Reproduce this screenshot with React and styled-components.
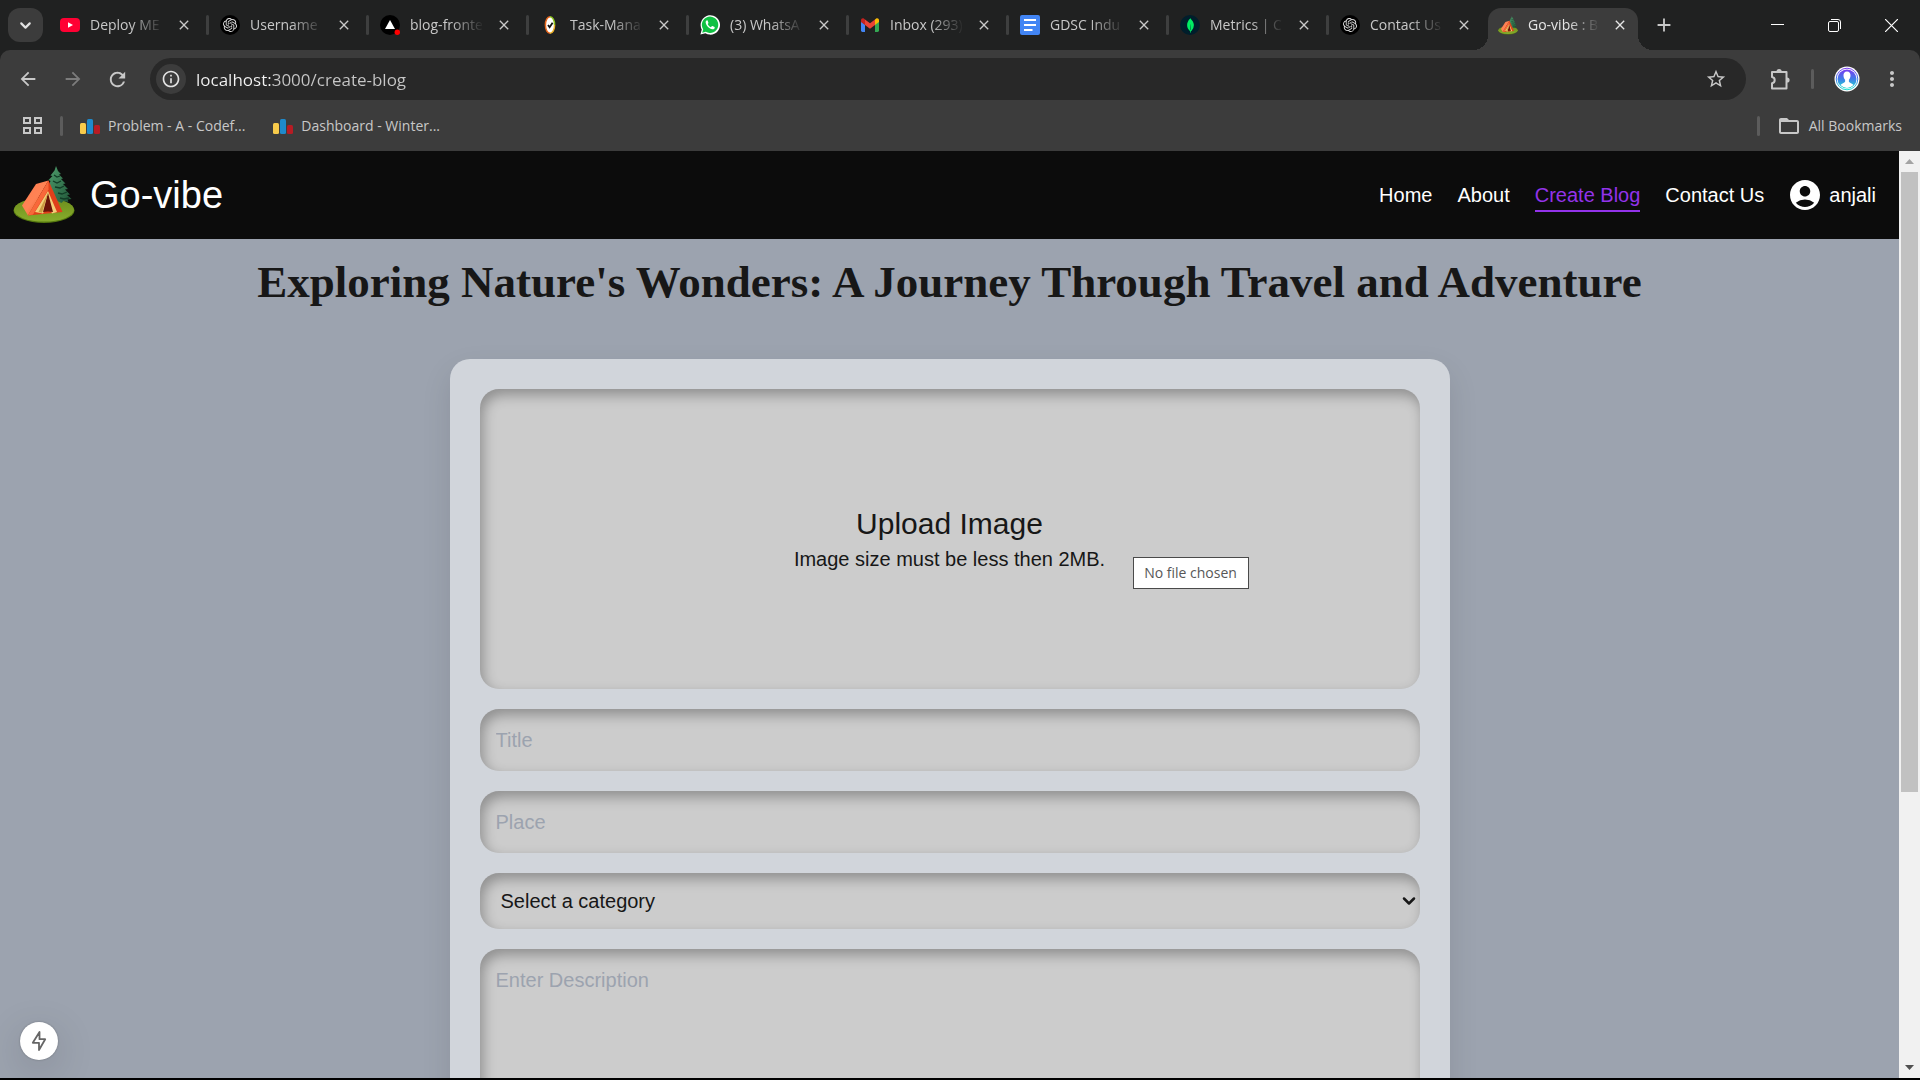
import React from "react";
import styled, { createGlobalStyle, css } from "styled-components";
import {
  MdAccountCircle,
  MdAdd,
  MdArrowBack,
  MdArrowForward,
  MdClose,
  MdFolderOpen,
  MdInfoOutline,
  MdMoreVert,
  MdRefresh,
  MdStarBorder,
} from "react-icons/md";
import { SiMongodb, SiOpenai } from "react-icons/si";
import { ChevronDown } from "lucide-react";

const sans = `"Liberation Sans", Arial, sans-serif`;
const ui = `"Open Sans", "Segoe UI", sans-serif`;

const GlobalStyle = createGlobalStyle`
  *, *::before, *::after { box-sizing: border-box; }
  body { margin: 0; background: #000; overflow: hidden; }
  button, input, select, textarea { font: inherit; margin: 0; }
  button { border: 0; padding: 0; background: none; color: inherit; }
  svg { display: block; flex: none; }
`;

const Window = styled.div`
  display: flex;
  flex-direction: column;
  height: 100vh;
  padding-bottom: 2px;
  font-family: ${ui};
`;

/* ---------- tab strip ---------- */

const TabStrip = styled.div`
  display: flex;
  align-items: flex-end;
  height: 50px;
  flex: none;
  padding-left: 8px;
  background: #202121;
  color: #c8c8c8;
`;

const TabSearch = styled.button`
  display: grid;
  place-items: center;
  width: 35px;
  height: 34px;
  margin: 0 5px 8px 0;
  border-radius: 12px;
  background: #3c3c3c;
  color: #e3e3e3;
  flex: none;
`;

const Tab = styled.div`
  position: relative;
  display: flex;
  align-items: center;
  flex: 0 1 160px;
  min-width: 0;
  height: 42px;
  padding: 0 16px 8px 12px;
  ${(p) =>
    !p.$active &&
    css`
      &::after {
        content: "";
        position: absolute;
        right: -1px;
        top: 7px;
        width: 3px;
        height: 20px;
        border-radius: 2px;
        background: #3e3f3f;
      }
      &:nth-last-child(4)::after { display: none; }
    `}
  ${(p) =>
    p.$active &&
    css`
      flex-basis: 150px;
      padding: 0 10px 8px;
      background: #3c3c3c;
      color: #e6e6e6;
      border-radius: 13px 13px 0 0;
      &::before,
      &::after {
        content: "";
        position: absolute;
        bottom: 0;
        width: 15px;
        height: 15px;
      }
      &::before {
        right: 100%;
        background: radial-gradient(circle at 0 0, transparent 15px, #3c3c3c 15px);
      }
      &::after {
        left: 100%;
        background: radial-gradient(circle at 100% 0, transparent 15px, #3c3c3c 15px);
      }
    `}
`;

const TabTitle = styled.button`
  flex: 1;
  min-width: 0;
  height: 34px;
  margin: 0 12px 0 10px;
  overflow: hidden;
  white-space: nowrap;
  text-align: left;
  font-size: 14px;
  line-height: 34px;
  mask-image: linear-gradient(90deg, #000 55%, transparent 100%);
`;

const TabClose = styled.button`
  width: 16px;
  height: 16px;
  flex: none;
`;

const NewTab = styled.button`
  display: grid;
  place-items: center;
  width: 34px;
  height: 34px;
  margin: 0 0 8px 9px;
  flex: none;
`;

const WindowControls = styled.div`
  display: flex;
  height: 50px;
  margin-left: auto;
  color: #fff;
`;

const WindowButton = styled.button`
  display: grid;
  place-items: center;
  width: 57px;
  height: 50px;
`;

/* ---------- toolbar ---------- */

const Chrome = styled.div`
  flex: none;
  background: #202121;
`;

const ChromePanel = styled.div`
  border-radius: 10px 10px 0 0;
  background: #3c3c3c;
  color: #c8c8c8;
`;

const Toolbar = styled.div`
  display: flex;
  align-items: center;
  height: 58px;
  padding: 0 6px 0 5px;
`;

const IconButton = styled.button`
  display: grid;
  place-items: center;
  width: 45px;
  height: 42px;
  flex: none;
  color: ${(p) => (p.$dim ? "#7c7c7c" : "#c8c8c8")};
`;

const AddressBar = styled.div`
  display: flex;
  align-items: center;
  flex: 1;
  height: 42px;
  margin: 0 11px 0 10px;
  padding: 0 8px 0 6px;
  border-radius: 21px;
  background: #282828;
`;

const SiteInfo = styled.button`
  display: grid;
  place-items: center;
  width: 30px;
  height: 30px;
  border-radius: 50%;
  background: #3c3c3c;
  color: #e3e3e3;
  flex: none;
`;

const AddressInput = styled.input`
  flex: 1;
  min-width: 0;
  height: 40px;
  margin-left: 10px;
  padding: 0;
  border: 0;
  outline: 0;
  font-size: 17px;
  color: transparent;
  background: linear-gradient(90deg, #f4f4f4 78px, #c7c7c7 78px);
  background-clip: text;
`;

const Divider = styled.span`
  width: 3px;
  height: 20px;
  border-radius: 2px;
  background: #5c5c5c;
  flex: none;
`;

const ToolbarDivider = styled(Divider)`
  margin: 0 10px 0 9px;
`;

const Bookmarks = styled.div`
  display: flex;
  align-items: center;
  height: 43px;
  padding: 0 18px 8px 23px;
  font-size: 14px;
`;

const BookmarkDivider = styled(Divider)`
  margin: 0 17px;
`;

const Bookmark = styled.a`
  display: flex;
  align-items: center;
  gap: 8px;
  margin-right: 28px;
  color: inherit;
  text-decoration: none;
  white-space: nowrap;
`;

const AllBookmarks = styled.button`
  display: flex;
  align-items: center;
  gap: 8px;
`;

const Spacer = styled.div`
  flex: 1;
`;

/* ---------- page ---------- */

const Viewport = styled.div`
  position: relative;
  display: flex;
  flex: 1;
  min-height: 0;
`;

const Page = styled.div`
  flex: 1;
  min-width: 0;
  overflow: hidden;
  background: #9ca3af;
  color: #171717;
  font-family: ${sans};
`;

const Header = styled.header`
  display: flex;
  align-items: center;
  justify-content: space-between;
  height: 88px;
  padding: 0 23px 0 13px;
  background: #0c0c0c;
  color: #fff;
`;

const Brand = styled.a`
  display: flex;
  align-items: center;
  gap: 15px;
  color: inherit;
  font-size: 38px;
  line-height: 48px;
  text-decoration: none;
`;

const Nav = styled.nav`
  display: flex;
  align-items: center;
  gap: 25px;
  font-size: 20px;
`;

const NavLink = styled.a`
  padding: 4px 0 2px;
  line-height: 26px;
  color: ${(p) => (p.$active ? "#9333ea" : "#fff")};
  border-bottom: 2px solid ${(p) => (p.$active ? "#9333ea" : "transparent")};
  text-decoration: none;
  white-space: nowrap;
`;

const UserButton = styled.button`
  display: flex;
  align-items: center;
  gap: 6px;
  margin-left: -2px;
`;

const Heading = styled.h1`
  margin: 0;
  padding: 20px 24px 54px;
  font-family: "Liberation Serif", Georgia, serif;
  font-size: 45px;
  font-weight: 700;
  line-height: 46px;
  text-align: center;
`;

const Card = styled.form`
  display: flex;
  flex-direction: column;
  gap: 20px;
  max-width: 1000px;
  margin: 0 auto 40px;
  padding: 30px;
  border-radius: 20px;
  background: #d1d5db;
  box-shadow: 0 12px 30px rgba(0, 0, 0, 0.1);
`;

const well = css`
  width: 100%;
  border: 0;
  outline: 0;
  border-radius: 19px;
  background: #ccc;
  box-shadow: inset 3px 6px 13px rgba(0, 0, 0, 0.3);
  color: #171717;
  font-size: 20px;
`;

const Upload = styled.label`
  ${well}
  position: relative;
  display: flex;
  flex-direction: column;
  align-items: center;
  justify-content: center;
  height: 300px;
  text-align: center;
`;

const UploadTitle = styled.span`
  font-size: 30px;
  line-height: 40px;
`;

const UploadHint = styled.span`
  line-height: 30px;
`;

const FileInput = styled.input`
  position: absolute;
  inset: 0;
  width: 100%;
  height: 100%;
  opacity: 0;
`;

const Tooltip = styled.span`
  position: absolute;
  top: 168px;
  left: 653px;
  min-width: 116px;
  border: 1px solid #4a4a4a;
  background: #fff;
  color: #575757;
  font-family: ${ui};
  font-size: 14px;
  line-height: 30px;
  white-space: nowrap;
`;

const TextField = styled.input`
  ${well}
  height: 62px;
  padding: 0 16px;
  &::placeholder { color: #9ca3af; opacity: 1; }
`;

const SelectBox = styled.div`
  display: grid;
  align-items: center;
  > * { grid-area: 1 / 1; }
  > svg {
    justify-self: end;
    margin-right: 1px;
    pointer-events: none;
  }
`;

const Category = styled.select`
  ${well}
  appearance: none;
  height: 56px;
  padding: 0 21px;
`;

const Description = styled.textarea`
  ${well}
  height: 250px;
  padding: 16px;
  line-height: 30px;
  resize: none;
  &::placeholder { color: #9ca3af; opacity: 1; }
`;

const DevBadge = styled.button`
  position: absolute;
  left: 20px;
  bottom: 18px;
  display: grid;
  place-items: center;
  width: 38px;
  height: 38px;
  border-radius: 50%;
  background: #fff;
  color: #666;
  box-shadow: 0 10px 40px rgba(0, 0, 0, 0.16), 0 0 2px rgba(0, 0, 0, 0.3);
`;

const Scrollbar = styled.div`
  display: flex;
  flex-direction: column;
  align-items: center;
  width: 21px;
  flex: none;
  background: #f1f1f1;
`;

const ScrollArrow = styled.button`
  display: grid;
  place-items: center;
  width: 21px;
  height: 21px;
  flex: none;
  color: ${(p) => (p.$end ? "#505050" : "#a3a3a3")};
`;

const ScrollTrack = styled.div`
  flex: 1;
  width: 17px;
`;

const ScrollThumb = styled.div`
  height: 70%;
  background: #c1c1c1;
`;

/* ---------- drawings ---------- */

const YouTube = () => (
  <svg width="20" height="20" viewBox="0 0 20 20">
    <rect y="3" width="20" height="14" rx="4" fill="#ff0033" />
    <path d="M8 7.2v5.6l5-2.8z" fill="#fff" />
  </svg>
);

const Disc = styled.span`
  position: relative;
  display: grid;
  place-items: center;
  width: 20px;
  height: 20px;
  flex: none;
  border-radius: 50%;
  background: ${(p) => p.$bg || "#000"};
  color: ${(p) => p.$fg || "#ddd"};
`;

const ChatGpt = () => (
  <Disc>
    <SiOpenai size={14} />
  </Disc>
);

const Vercel = () => (
  <svg width="20" height="20" viewBox="0 0 20 20">
    <circle cx="10" cy="10" r="10" fill="#000" />
    <path d="M10 5l5 9H5z" fill="#fff" />
    <circle cx="17.3" cy="17.3" r="2.7" fill="#f00" />
  </svg>
);

const TaskIcon = () => (
  <svg width="20" height="20" viewBox="0 0 20 20">
    <ellipse cx="10" cy="10" rx="4.6" ry="8.2" fill="#fff" />
    <path d="M10 1.8C7.4 1.8 5.4 5.4 5.4 10S7.4 18.2 10 18.2" fill="none" stroke="#e8671b" strokeWidth="1.5" />
    <path d="M10 1.8c2.6 0 4.6 3.6 4.6 8.2" fill="none" stroke="#8fc31f" strokeWidth="1.5" />
    <path d="M14.6 10c0 4.6-2 8.2-4.6 8.2" fill="none" stroke="#f0b429" strokeWidth="1.5" />
    <path d="M8 10l1.6 2.2 3-4.4" fill="none" stroke="#111" strokeWidth="1.8" />
  </svg>
);

const WhatsApp = () => (
  <svg width="20" height="20" viewBox="0 0 20 20">
    <path d="M.4 19.6l1.4-5A9.7 9.7 0 1 1 5.4 18.3z" fill="#fff" />
    <path d="M2.2 17.8l1-3.5a8.2 8.2 0 1 1 2.6 2.5z" fill="#10c143" />
    <path
      d="M7.2 5.3c-.9.2-1.7 1.2-1.5 2.4.5 3 3.6 6.1 6.6 6.6 1.2.2 2.2-.6 2.4-1.6l-.1-.6-2.2-1.1-.5.1-.9 1.1c-1.6-.6-2.7-1.7-3.3-3.2l.8-1-.9-2.5z"
      fill="#fff"
    />
  </svg>
);

const Gmail = () => (
  <svg width="20" height="20" viewBox="0 0 20 20">
    <path d="M1 6.5l4 3V17H2.4A1.4 1.4 0 0 1 1 15.6z" fill="#4285f4" />
    <path d="M19 6.5l-4 3V17h2.6a1.4 1.4 0 0 0 1.4-1.4z" fill="#34a853" />
    <path d="M15 4.5l1.2-.9c1.2-.9 2.8 0 2.8 1.6v1.7l-4 3z" fill="#fbbc04" />
    <path d="M5 9.9V4.5L10 8.3l5-3.8v5.4l-5 3.8z" fill="#ea4335" />
    <path d="M1 5.2c0-1.6 1.6-2.5 2.8-1.6l1.2.9v5.4l-4-3z" fill="#c5221f" />
  </svg>
);

const Docs = () => (
  <svg width="20" height="20" viewBox="0 0 20 20">
    <rect width="20" height="20" rx="2" fill="#4285f4" />
    <path d="M4 5h12M4 10h12M4 15h8.500" stroke="#fff" strokeWidth="2" />
  </svg>
);

const Mongo = () => (
  <Disc $bg="#001e2b" $fg="#00ed64">
    <SiMongodb size={15} />
  </Disc>
);

const Tent = ({ size, height }) => (
  <svg width={size} height={height} viewBox="0 0 62 58">
    <defs>
      <linearGradient id="tentSide" x1="0" y1="0" x2="1" y2="1">
        <stop offset="0" stopColor="#ff7a4d" />
        <stop offset=".5" stopColor="#ff8355" />
        <stop offset="1" stopColor="#e9471c" />
      </linearGradient>
      <linearGradient id="grass" x1="0" y1="0" x2="0" y2="1">
        <stop offset="0" stopColor="#6c8c1c" />
        <stop offset="1" stopColor="#88ad2c" />
      </linearGradient>
      <linearGradient id="pine" x1="0" y1="0" x2="1" y2="1">
        <stop offset="0" stopColor="#4f9d6c" />
        <stop offset="1" stopColor="#1f5437" />
      </linearGradient>
    </defs>
    <ellipse cx="31" cy="44.5" rx="30.5" ry="12.5" fill="#55780f" />
    <ellipse cx="31" cy="43.8" rx="30" ry="11.8" fill="url(#grass)" />
    <path
      d="M43 0l2 5 3 3-2 .5 4 4-2 .5 4.500 4.500-2.500.5 5 5-3 .5 5 5-3 .5 4.500 4-4 .6 1 2.500-5-1-2 2-4-2-4 2-4-20 1-2-2-1 4-4-2-.5 4-5z"
      fill="url(#pine)"
    />
    <path
      d="M41 9l3 2 3-1M40 15l4 2 4-2M42 21l5 1 4-2M45 27l4 1 5-2M47 32l4 1 5-1"
      fill="none"
      stroke="#123c26"
      strokeWidth="1.3"
    />
    <path d="M23 18l12.500-3.500L15 49.500l-6-10z" fill="url(#tentSide)" />
    <path d="M35.500 14.500L49.500 46 15 49.500z" fill="#e0401b" />
    <path d="M35.500 14.500L15 49.500l5-1 15.500-25z" fill="#f8683a" />
    <path d="M35 25L22 46l8 1.500L35 37l4 10.500 5-1.500z" fill="#f3cf78" />
    <path d="M35 27l-5 19 5-.5 5 .5z" fill="#6b1408" />
    <path d="M35 27l-9.500 19 3.500.8z" fill="#c99a3f" />
  </svg>
);

const CodeforcesIcon = () => (
  <svg width="20" height="20" viewBox="0 0 20 20">
    <rect y="7" width="6" height="11" rx="1.5" fill="#f8cb4b" />
    <rect x="7" y="3" width="6" height="15" rx="1.5" fill="#1f8acb" />
    <rect x="14" y="9" width="6" height="9" rx="1.5" fill="#b71c24" />
  </svg>
);

const AppsGrid = () => (
  <svg width="20" height="20" viewBox="0 0 20 20" fill="none" stroke="#c8c8c8" strokeWidth="2">
    <path d="M1 2h6v5H1zM12 2h6v5h-6zM1 12h6v5H1zM12 12h6v5h-6z" />
  </svg>
);

const Puzzle = () => (
  <svg width="22" height="22" viewBox="0 0 22 22">
    <path
      d="M3 4h14.500v16.500H3v-5.200c3.600-.4 3.600-6 0-6.400z"
      fill="none"
      stroke="#c8c8c8"
      strokeWidth="2"
      strokeLinejoin="round"
    />
    <path d="M7.500 3.500a2.600 2.600 0 0 1 5.200 0zM18 9.400a2.600 2.600 0 0 1 0 5.200z" fill="#c8c8c8" />
  </svg>
);

const Avatar = () => (
  <svg width="26" height="26" viewBox="0 0 26 26">
    <defs>
      <linearGradient id="avatarFill" x1="0" y1="0" x2="0" y2="1">
        <stop offset="0" stopColor="#7a3cf0" />
        <stop offset=".5" stopColor="#3f7be8" />
        <stop offset="1" stopColor="#1fe0d0" />
      </linearGradient>
    </defs>
    <circle cx="13" cy="13" r="12.5" fill="#fff" />
    <circle cx="13" cy="13" r="10.8" fill="none" stroke="url(#avatarFill)" strokeWidth="1" />
    <circle cx="13" cy="13" r="9.5" fill="url(#avatarFill)" />
    <path
      d="M13 5.500c-2.400 0-3.700 1.800-3.500 4.300.1 1.700.7 3 1.600 3.900v2c-.6 1.300-3.400 1.500-4.600 3.400a9 9 0 0 0 13 0c-1.200-1.900-4-2.100-4.600-3.400v-2c.9-.9 1.500-2.200 1.600-3.900.2-2.500-1.100-4.300-3.500-4.300z"
      fill="#fff"
    />
  </svg>
);

const Bolt = () => (
  <svg width="16" height="22" viewBox="0 0 16 22" fill="none" stroke="currentColor" strokeWidth="1.800">
    <path d="M8.500 2L1.800 12.800h6.200V20l6.200-10.800H8.500z" strokeLinejoin="round" />
  </svg>
);

const tabs = [
  { title: "Deploy ME", icon: <YouTube /> },
  { title: "Username", icon: <ChatGpt /> },
  { title: "blog-fronte", icon: <Vercel /> },
  { title: "Task-Mana", icon: <TaskIcon /> },
  { title: "(3) WhatsA", icon: <WhatsApp /> },
  { title: "Inbox (293)", icon: <Gmail /> },
  { title: "GDSC Indu", icon: <Docs /> },
  { title: "Metrics | C", icon: <Mongo /> },
  { title: "Contact Us", icon: <ChatGpt /> },
  { title: "Go-vibe : B", icon: <Tent size={20} height={19} />, active: true },
];

const links = ["Home", "About", "Create Blog", "Contact Us"];

export default function App() {
  return (
    <Window>
      <GlobalStyle />
      <TabStrip>
        <TabSearch aria-label="Search tabs">
          <ChevronDown size={17} strokeWidth={3} />
        </TabSearch>
        {tabs.map((tab, i) => (
          <Tab key={i} $active={tab.active}>
            {tab.icon}
            <TabTitle>{tab.title}</TabTitle>
            <TabClose aria-label="Close tab">
              <MdClose size={16} />
            </TabClose>
          </Tab>
        ))}
        <NewTab aria-label="New tab">
          <MdAdd size={22} />
        </NewTab>
        <WindowControls>
          <WindowButton aria-label="Minimize">
            <svg width="13" height="13" viewBox="0 0 13 13" stroke="currentColor">
              <path d="M0 5.500h13" />
            </svg>
          </WindowButton>
          <WindowButton aria-label="Restore">
            <svg width="13" height="13" viewBox="0 0 13 13" fill="none" stroke="currentColor">
              <rect x=".5" y="2.5" width="10" height="10" rx="1.5" />
              <path d="M3 .5h7A2.500 2.500 0 0 1 12.500 3v7" />
            </svg>
          </WindowButton>
          <WindowButton aria-label="Close window">
            <svg width="13" height="13" viewBox="0 0 13 13" stroke="currentColor" strokeWidth="1.2">
              <path d="M0 0l13 13M13 0L0 13" />
            </svg>
          </WindowButton>
        </WindowControls>
      </TabStrip>

      <Chrome>
        <ChromePanel>
          <Toolbar>
            <IconButton aria-label="Back">
              <MdArrowBack size={22} />
            </IconButton>
            <IconButton aria-label="Forward" $dim>
              <MdArrowForward size={22} />
            </IconButton>
            <IconButton aria-label="Reload">
              <MdRefresh size={23} />
            </IconButton>
            <AddressBar>
              <SiteInfo aria-label="Site information">
                <MdInfoOutline size={20} />
              </SiteInfo>
              <AddressInput aria-label="Address" defaultValue="localhost:3000/create-blog" />
              <IconButton aria-label="Bookmark this page">
                <MdStarBorder size={22} />
              </IconButton>
            </AddressBar>
            <IconButton aria-label="Extensions">
              <Puzzle />
            </IconButton>
            <ToolbarDivider />
            <IconButton aria-label="Profile">
              <Avatar />
            </IconButton>
            <IconButton aria-label="Menu">
              <MdMoreVert size={24} />
            </IconButton>
          </Toolbar>
          <Bookmarks>
            <AppsGrid />
            <BookmarkDivider />
            <Bookmark href="#problem">
              <CodeforcesIcon />
              Problem - A - Codef...
            </Bookmark>
            <Bookmark href="#dashboard">
              <CodeforcesIcon />
              Dashboard - Winter...
            </Bookmark>
            <Spacer />
            <BookmarkDivider />
            <AllBookmarks>
              <MdFolderOpen size={24} />
              All Bookmarks
            </AllBookmarks>
          </Bookmarks>
        </ChromePanel>
      </Chrome>

      <Viewport>
        <Page>
          <Header>
            <Brand href="#home">
              <Tent size={62} height={58} />
              Go-vibe
            </Brand>
            <Nav>
              {links.map((name) => (
                <NavLink key={name} href="#nav" $active={name === "Create Blog"}>
                  {name}
                </NavLink>
              ))}
              <UserButton>
                <MdAccountCircle size={36} />
                anjali
              </UserButton>
            </Nav>
          </Header>
          <Heading>Exploring Nature's Wonders: A Journey Through Travel and Adventure</Heading>
          <Card>
            <Upload>
              <UploadTitle>Upload Image</UploadTitle>
              <UploadHint>Image size must be less then 2MB.</UploadHint>
              <FileInput type="file" />
              <Tooltip>No file chosen</Tooltip>
            </Upload>
            <TextField aria-label="Title" placeholder="Title" />
            <TextField aria-label="Place" placeholder="Place" />
            <SelectBox>
              <Category aria-label="Category">
                <option>Select a category</option>
              </Category>
              <ChevronDown size={20} strokeWidth={3} />
            </SelectBox>
            <Description aria-label="Description" placeholder="Enter Description" />
          </Card>
        </Page>
        <Scrollbar>
          <ScrollArrow aria-label="Scroll up">
            <svg width="9" height="5" viewBox="0 0 9 5" fill="currentColor">
              <path d="M0 5l4.500-5L9 5z" />
            </svg>
          </ScrollArrow>
          <ScrollTrack>
            <ScrollThumb />
          </ScrollTrack>
          <ScrollArrow aria-label="Scroll down" $end>
            <svg width="9" height="5" viewBox="0 0 9 5" fill="currentColor">
              <path d="M0 0l4.500 5L9 0z" />
            </svg>
          </ScrollArrow>
        </Scrollbar>
        <DevBadge aria-label="Developer tools">
          <Bolt />
        </DevBadge>
      </Viewport>
    </Window>
  );
}
